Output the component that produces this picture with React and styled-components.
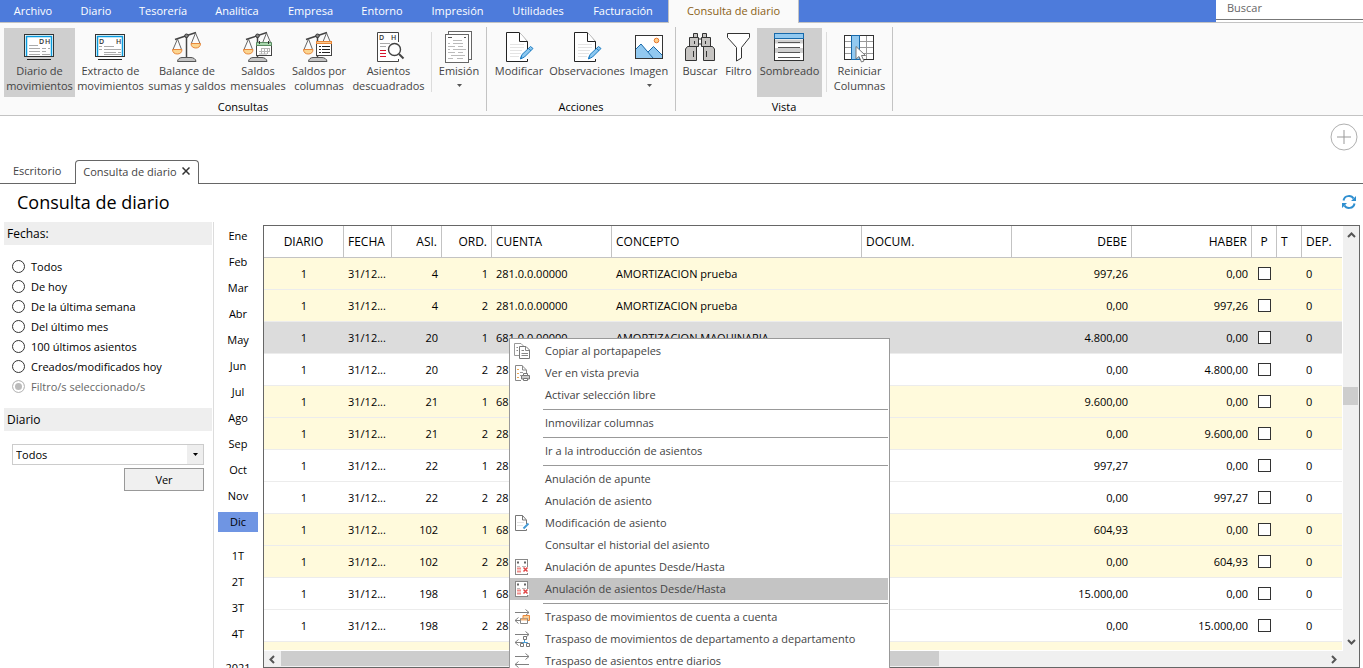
import styled, { createGlobalStyle, css } from "styled-components";

const GlobalStyle = createGlobalStyle`
  * {
    box-sizing: border-box;
  }

  body {
    margin: 0;
    background: #fff;
    color: #000;
    font-family: "Open Sans", "Noto Sans", sans-serif;
    font-size: 11px;
    line-height: 15px;
  }

  button,
  input,
  select {
    margin: 0;
    font: inherit;
    color: inherit;
  }
`;

const menus = [
  { label: "Archivo", width: 66 },
  { label: "Diario", width: 60 },
  { label: "Tesorería", width: 74 },
  { label: "Analítica", width: 74 },
  { label: "Empresa", width: 73 },
  { label: "Entorno", width: 70 },
  { label: "Impresión", width: 81 },
  { label: "Utilidades", width: 80 },
  { label: "Facturación", width: 90 },
  { label: "Consulta de diario", width: 131, active: true },
];

const ranges = [
  "Todos",
  "De hoy",
  "De la última semana",
  "Del último mes",
  "100 últimos asientos",
  "Creados/modificados hoy",
];

const periods = [
  ["Ene", "Feb", "Mar", "Abr", "May", "Jun", "Jul", "Ago", "Sep", "Oct", "Nov", "Dic"],
  ["1T", "2T", "3T", "4T"],
  ["2021"],
];

const columns = [
  { title: "DIARIO", width: 80, align: "center" },
  { title: "FECHA", width: 48 },
  { title: "ASI.", width: 50, align: "right" },
  { title: "ORD.", width: 50, align: "right" },
  { title: "CUENTA", width: 120 },
  { title: "CONCEPTO", width: 250 },
  { title: "DOCUM.", width: 150 },
  { title: "DEBE", width: 120, align: "right" },
  { title: "HABER", width: 120, align: "right" },
  { title: "P", width: 25, align: "center" },
  { title: "T", width: 25 },
  { title: "DEP." },
];

const rows = [
  { asi: "4", ord: "1", cuenta: "281.0.0.00000", concepto: "AMORTIZACION prueba", debe: "997,26", haber: "0,00", tone: "yellow" },
  { asi: "4", ord: "2", cuenta: "281.0.0.00000", concepto: "AMORTIZACION prueba", debe: "0,00", haber: "997,26", tone: "yellow" },
  { asi: "20", ord: "1", cuenta: "681.0.0.00000", concepto: "AMORTIZACION MAQUINARIA", debe: "4.800,00", haber: "0,00", tone: "selected" },
  { asi: "20", ord: "2", cuenta: "28", debe: "0,00", haber: "4.800,00" },
  { asi: "21", ord: "1", cuenta: "68", debe: "9.600,00", haber: "0,00", tone: "yellow" },
  { asi: "21", ord: "2", cuenta: "28", debe: "0,00", haber: "9.600,00", tone: "yellow" },
  { asi: "22", ord: "1", cuenta: "28", debe: "997,27", haber: "0,00" },
  { asi: "22", ord: "2", cuenta: "28", debe: "0,00", haber: "997,27" },
  { asi: "102", ord: "1", cuenta: "68", debe: "604,93", haber: "0,00", tone: "yellow" },
  { asi: "102", ord: "2", cuenta: "28", debe: "0,00", haber: "604,93", tone: "yellow" },
  { asi: "198", ord: "1", cuenta: "68", debe: "15.000,00", haber: "0,00" },
  { asi: "198", ord: "2", cuenta: "28", debe: "0,00", haber: "15.000,00" },
];

const menuGroups = [
  [
    { label: "Copiar al portapapeles", icon: "copy" },
    { label: "Ver en vista previa", icon: "preview" },
    { label: "Activar selección libre" },
  ],
  [{ label: "Inmovilizar columnas" }],
  [{ label: "Ir a la introducción de asientos" }],
  [
    { label: "Anulación de apunte" },
    { label: "Anulación de asiento" },
    { label: "Modificación de asiento", icon: "edit" },
    { label: "Consultar el historial del asiento" },
    { label: "Anulación de apuntes Desde/Hasta", icon: "cancel" },
    { label: "Anulación de asientos Desde/Hasta", icon: "cancel", active: true },
  ],
  [
    { label: "Traspaso de movimientos de cuenta a cuenta", icon: "moveAccount" },
    { label: "Traspaso de movimientos de departamento a departamento", icon: "moveDepartment" },
    { label: "Traspaso de asientos entre diarios", icon: "move" },
  ],
];

/* Ribbon icons */

function Icon({ children }) {
  return (
    <svg width="33" height="32" viewBox="0 0 33 32" fill="none" aria-hidden="true">
      {children}
    </svg>
  );
}

function ScreenIcon({ letters, lines }) {
  return (
    <Icon>
      <rect x="1.5" y="3.5" width="29" height="22" fill="#fff" stroke="#333" />
      <path d="M3.5 25V5.5H28.5V25" stroke="#0a9bdc" strokeWidth="1.5" />
      <path d={lines} stroke="#aaa" />
      <path d="M4 28.5H28" stroke="#222" />
      {letters.map(([letter, x]) => (
        <text key={letter} x={x} y="13" fill="#333" fontSize="7" fontWeight="600">
          {letter}
        </text>
      ))}
    </Icon>
  );
}

function ScaleShape({ rightPan = true }) {
  return (
    <>
      <path d="M15.5 5V26" stroke="#444" strokeWidth="1.5" />
      <path d="M4 8.5L25 1.5" stroke="#444" strokeWidth="1.5" />
      <path d="M6.5 8L2 18.5M6.5 8L10.5 18.5M24.5 2L20.5 12M24.5 2L29 12.5" stroke="#666" />
      <circle cx="15.5" cy="4.8" r="1.8" fill="#888" stroke="#333" />
      <path d="M1.5 18.5H11C11 21.5 9 23 6.3 23S1.5 21.5 1.5 18.5Z" fill="#fbd591" stroke="#e8873a" />
      {rightPan && (
        <path d="M20 12.5H29.5C29.5 15.5 27.5 17 24.8 17S20 15.5 20 12.5Z" fill="#fbd591" stroke="#e8873a" />
      )}
      <path d="M6.5 30.5C6.5 28 9 26.5 11 26.5H20C22 26.5 25 28 25 30.5Z" fill="#c4c4c4" stroke="#555" />
    </>
  );
}

function ScaleIcon() {
  return (
    <Icon>
      <ScaleShape />
    </Icon>
  );
}

function ScaleCalendarIcon() {
  return (
    <Icon>
      <ScaleShape rightPan={false} />
      <rect x="14.5" y="12.5" width="15" height="12" fill="#fff" stroke="#444" />
      <path d="M14.5 11.5H29.5V14.5H14.5Z" fill="#a8d8ae" stroke="#5b8b62" />
      <path d="M17.5 10V13M26.5 10V13" stroke="#333" />
      <path d="M19 17.5H28M17 20.5H28M17 23H25M19.5 17V23M22.5 17V23M25.5 17V23M27.5 17V21" stroke="#b5b5b5" />
    </Icon>
  );
}

function ScaleTableIcon() {
  return (
    <Icon>
      <g transform="translate(-1 0)">
        <ScaleShape rightPan={false} />
      </g>
      <rect x="13.5" y="12.5" width="15" height="12" fill="#fff" stroke="#444" />
      <rect x="13.5" y="10.5" width="15" height="2" fill="#fbc98a" stroke="#e8873a" />
      <path d="M16 15.5H27M16 18.5H27M16 21.5H27" stroke="#222" strokeDasharray="2 1 8" />
    </Icon>
  );
}

function MismatchIcon() {
  return (
    <Icon>
      <path d="M26.5 11V1.5H5.5V30.5H26.5V28" fill="#fff" stroke="#444" />
      <text x="7" y="9" fill="#333" fontSize="7" fontWeight="600">D</text>
      <text x="19" y="9" fill="#333" fontSize="7" fontWeight="600">H</text>
      <path d="M8 12.5H18M8 15.5H14" stroke="#aaa" />
      <path d="M8 19.5H14M8 22.5H14M8 25.5H14" stroke="#d8142c" />
      <circle cx="22.5" cy="18.5" r="6" fill="#fff" stroke="#444" strokeWidth="1.4" />
      <path d="M27 23L31.5 27.5" stroke="#444" strokeWidth="2" />
    </Icon>
  );
}

function PagesIcon() {
  return (
    <Icon>
      <rect x="5.5" y=".5" width="23" height="28" fill="#fff" stroke="#666" />
      <rect x="2.5" y="3.5" width="23" height="28" fill="#fff" stroke="#666" />
      <path d="M5 6.5H9M21 6.5H23" stroke="#555" />
      <path d="M10 9.5H19M5 12.5H7M10 12.5H20M5 15.5H12M15 15.5H20M5 18.5H7M10 18.5H23M5 21.5H12M15 21.5H20M8 24.5H22M5 27.5H10M14 27.5H20" stroke="#bbb" />
    </Icon>
  );
}

function EditPageIcon() {
  return (
    <Icon>
      <path d="M24.5 20V10.5L16 1.5H3.5V30.5H24.5V28" fill="#fff" stroke="#222" />
      <path d="M16.5 1.5V10.5H24.5" fill="#fff" stroke="#222" />
      <path d="M7 13.5H21M7 16.5H21M7 19.5H19M7 22.5H18M7 25.5H16" stroke="#e4e4e4" />
      <path d="M17.5 28L19 23.5L27.5 15.5L30 17.5L21.5 26Z" fill="#8cc8f0" stroke="#1b7bc2" />
      <path d="M25.5 17.5L28 19.7M17.5 28L18.5 25" stroke="#1b7bc2" />
    </Icon>
  );
}

function PictureIcon() {
  return (
    <Icon>
      <rect x="2.5" y="4.5" width="27" height="23" fill="#fff" />
      <path d="M3 18L8 13L20 27H3Z" fill="#92c9f0" />
      <path d="M15 21L20.5 15.5L29 24V27H20Z" fill="#92c9f0" />
      <path d="M3 18L8 13L20 27M15 21L20.5 15.5L29 24" stroke="#1769aa" />
      <rect x="2.5" y="4.5" width="27" height="23" stroke="#333" />
      <circle cx="23.5" cy="9.5" r="2.3" fill="#ffd08a" stroke="#e8762d" />
    </Icon>
  );
}

function BinocularsIcon() {
  return (
    <Icon>
      <g fill="#c6c4c2" stroke="#333">
        <path d="M9.5 2.5H13.5V6.5H9.5ZM18.5 2.5H22.5V6.5H18.5Z" />
        <path d="M14 8H18V13H14Z" fill="#fff" />
        <path d="M5.5 6.5H14.5V15.5H5.5ZM17.5 6.5H26.5V15.5H17.5Z" />
        <path d="M3.5 15.5H12.5V29.5H1.5V18ZM19.5 15.5H28.5L30.5 18V29.5H19.5Z" />
        <path d="M10.5 10V13M21.5 10V13M9.5 20V26M22.5 20V26" />
      </g>
    </Icon>
  );
}

function FunnelIcon() {
  return (
    <Icon>
      <path d="M5.5 2.5H27.5V6.5L19.5 16.5V27L14.5 30V16.5L5.5 6.5Z" fill="#fff" stroke="#333" />
    </Icon>
  );
}

function ShadedRowsIcon() {
  return (
    <Icon>
      <rect x="1.5" y="2.5" width="29" height="27" fill="#fff" stroke="#333" />
      <path d="M2 19.5H30" stroke="#d0d0d0" strokeWidth="5" />
      <path d="M2 10.5H30" stroke="#d0d0d0" strokeWidth="4" />
      <rect x="1.5" y="2.5" width="29" height="5" fill="#92c9f0" stroke="#1769aa" />
      <path d="M5 11.5H27M5 16.5H27M5 21.5H27M5 26.5H27" stroke="#555" />
    </Icon>
  );
}

function ColumnsIcon() {
  return (
    <Icon>
      <rect x="1.5" y="4.5" width="29" height="24" fill="#fff" />
      <path d="M2 10.5H30M2 16.5H30M2 22.5H30M23.5 5V28" stroke="#999" />
      <rect x="1.5" y="4.5" width="29" height="24" stroke="#333" />
      <rect x="8.5" y="4.5" width="8" height="24" fill="#92c9f0" stroke="#1769aa" />
      <path d="M13 15.5V28L16 25.5L18.5 31L21 30L18.5 24.5H22.5Z" fill="#fff" stroke="#777" />
    </Icon>
  );
}

/* Context menu icons */

function SwapArrows() {
  return <path d="M1 3.5H15M11.5 .5L15 3.5L11.5 6.5M1 11.5H9M4.5 8.5L1 11.5L4.5 14.5" stroke="#808080" />;
}

const menuIcons = {
  copy: (
    <>
      <path d="M5 12.5H.5V.5H7L9.5 3" fill="#fff" stroke="#999" />
      <path d="M5.5 3.5H12L15.5 7V15.5H5.5Z" fill="#fff" stroke="#777" />
      <path d="M11.5 3.5V7.5H15M2.5 4.5H4M2.5 7.5H4M7.5 7.5H10M7.5 10.5H14M7.5 12.5H14" stroke="#888" />
    </>
  ),
  preview: (
    <>
      <path d="M7 15.5H1.5V.5H8L12.5 5V8" fill="#fff" stroke="#888" />
      <path d="M8.5 .5V5H12" stroke="#888" />
      <path d="M3 4.5H5M3 8.5H5M3 12.5H5" stroke="#eaa754" />
      <path d="M6 7.5H9M6 10.5H7" stroke="#999" />
      <path d="M7.5 10.5H15.5V14H7.5Z" fill="#ccc" stroke="#777" />
      <path d="M9.5 8.5H13.5V10.5H9.5ZM9.5 13.5H13.5V15.5H9.5Z" fill="#fff" stroke="#777" />
    </>
  ),
  edit: (
    <>
      <path d="M12.5 9V5L8.5 .5H1.5V15.5H12.5V14" fill="#fff" stroke="#777" />
      <path d="M8.5 .5V5H12" stroke="#777" />
      <path d="M3 7.5H10M3 10.5H9" stroke="#e4e4e4" />
      <path d="M9.5 13.5L14.5 8.5" stroke="#459bd6" strokeWidth="2" />
    </>
  ),
  cancel: (
    <>
      <rect x="1.5" y=".5" width="12" height="15" fill="#fff" stroke="#888" />
      <path d="M3 3.5H5M10 3.5H12" stroke="#666" strokeWidth="2" />
      <path d="M3 7.5H6M8 7.5H12" stroke="#bbb" />
      <path d="M3 9.5H7M3 12.5H7" stroke="#f0908c" strokeWidth="2" />
      <path d="M8 8H15V14H8Z" fill="#fff" />
      <path d="M9.5 8.5L13.5 12.5M13.5 8.5L9.5 12.5" stroke="#e04545" strokeWidth="1.5" />
    </>
  ),
  moveAccount: (
    <>
      <SwapArrows />
      <path d="M9 6.5H15.5V11.5H9Z" fill="#fbd09a" stroke="#e8873a" />
      <path d="M6.5 9.5H13.5V14.5H6.5Z" fill="#fff" stroke="#888" />
      <path d="M7 10.5H13" stroke="#f3b072" strokeWidth="2" />
    </>
  ),
  moveDepartment: (
    <>
      <SwapArrows />
      <path d="M10.5 9V11.5M8.5 13V11.5H13.5V13" stroke="#459bd6" />
      <path d="M9.5 5.5H12.5V8.5H9.5ZM6.5 12.5H9.5V15.5H6.5ZM12.5 12.5H15.5V15.5H12.5Z" fill="#fff" stroke="#777" />
    </>
  ),
  move: <path d="M1 3.5H15M11.5 .5L15 3.5L11.5 6.5M15 11.5H1M4.5 8.5L1 11.5L4.5 14.5" stroke="#808080" />,
};

function Chevron({ turn = 0 }) {
  return (
    <svg width="9" height="9" viewBox="0 0 9 9" fill="none" aria-hidden="true">
      <path d="M1 6L4.5 2.5L8 6" stroke="#555" strokeWidth="2" transform={`rotate(${turn} 4.5 4.5)`} />
    </svg>
  );
}

function Triangle({ color }) {
  return (
    <svg width="5" height="3" viewBox="0 0 5 3" aria-hidden="true">
      <path d="M0 0H5L2.5 3Z" fill={color} />
    </svg>
  );
}

function Tool({ width, icon, label, pressed, dropdown }) {
  return (
    <ToolButton type="button" $width={width} $pressed={pressed}>
      {icon}
      {label.map((line) => (
        <span key={line}>{line}</span>
      ))}
      {dropdown && (
        <DropMark>
          <Triangle color="#555" />
        </DropMark>
      )}
    </ToolButton>
  );
}

function Ribbon() {
  return (
    <RibbonBar>
      <ToolGroup>
        <Tools>
          <Tool
            width={71}
            pressed
            icon={
              <ScreenIcon
                letters={[["D", 16], ["H", 22]]}
                lines="M6 14.5H15M6 17.5H17M19 17.5H23M6 20.5H17M19 20.5H23M25 17.5H27M6 23.5H17M19 23.5H27"
              />
            }
            label={["Diario de", "movimientos"]}
          />
          <Tool
            width={71}
            icon={
              <ScreenIcon
                letters={[["D", 5], ["H", 22]]}
                lines="M5 15.5H8M10 15.5H20M5 18.5H8M10 18.5H27M10 21.5H22M24 21.5H27M10 23.5H27"
              />
            }
            label={["Extracto de", "movimientos"]}
          />
          <Tool width={82} icon={<ScaleIcon />} label={["Balance de", "sumas y saldos"]} />
          <Tool width={60} icon={<ScaleCalendarIcon />} label={["Saldos", "mensuales"]} />
          <Tool width={62} icon={<ScaleTableIcon />} label={["Saldos por", "columnas"]} />
          <Tool width={77} icon={<MismatchIcon />} label={["Asientos", "descuadrados"]} />
          <ToolDivider />
          <Tool width={46} icon={<PagesIcon />} label={["Emisión"]} dropdown />
        </Tools>
        <GroupName>Consultas</GroupName>
      </ToolGroup>
      <ToolGroup>
        <Tools>
          <Tool width={56} icon={<EditPageIcon />} label={["Modificar"]} />
          <Tool width={80} icon={<EditPageIcon />} label={["Observaciones"]} />
          <Tool width={44} icon={<PictureIcon />} label={["Imagen"]} dropdown />
        </Tools>
        <GroupName>Acciones</GroupName>
      </ToolGroup>
      <ToolGroup>
        <Tools>
          <Tool width={40} icon={<BinocularsIcon />} label={["Buscar"]} />
          <Tool width={37} icon={<FunnelIcon />} label={["Filtro"]} />
          <Tool width={65} pressed icon={<ShadedRowsIcon />} label={["Sombreado"]} />
          <ToolDivider />
          <Tool width={57} icon={<ColumnsIcon />} label={["Reiniciar", "Columnas"]} />
        </Tools>
        <GroupName>Vista</GroupName>
      </ToolGroup>
    </RibbonBar>
  );
}

function Filters() {
  return (
    <FiltersPanel>
      <PanelTitle id="fechas">Fechas:</PanelTitle>
      <RadioList role="radiogroup" aria-labelledby="fechas">
        {ranges.map((range) => (
          <RadioLabel key={range}>
            <Radio type="radio" name="rango" />
            {range}
          </RadioLabel>
        ))}
        <RadioLabel $disabled>
          <Radio type="radio" name="filtro" defaultChecked disabled />
          Filtro/s seleccionado/s
        </RadioLabel>
      </RadioList>
      <PanelTitle as="label" htmlFor="diario">
        Diario
      </PanelTitle>
      <JournalForm>
        <SelectBox>
          <Select id="diario">
            <option>Todos</option>
          </Select>
          <SelectArrow>
            <Triangle color="#000" />
          </SelectArrow>
        </SelectBox>
        <ViewButton type="button">Ver</ViewButton>
      </JournalForm>
    </FiltersPanel>
  );
}

function Grid() {
  return (
    <GridFrame>
      <GridMain>
        <GridView>
          <Table>
            <colgroup>
              {columns.map((column) => (
                <Column key={column.title} $width={column.width} />
              ))}
            </colgroup>
            <thead>
              <tr>
                {columns.map((column) => (
                  <HeadCell key={column.title} $align={column.align}>
                    {column.title}
                  </HeadCell>
                ))}
              </tr>
            </thead>
            <tbody>
              {rows.map((row) => (
                <Row key={row.asi + "-" + row.ord} $tone={row.tone}>
                  <Cell $align="center">1</Cell>
                  <Cell>31/12...</Cell>
                  <Cell $align="right">{row.asi}</Cell>
                  <Cell $align="right">{row.ord}</Cell>
                  <Cell>{row.cuenta}</Cell>
                  <Cell>{row.concepto}</Cell>
                  <Cell />
                  <Cell $align="right">{row.debe}</Cell>
                  <Cell $align="right">{row.haber}</Cell>
                  <Cell $align="center">
                    <Check type="checkbox" aria-label="P" />
                  </Cell>
                  <Cell />
                  <Cell>0</Cell>
                </Row>
              ))}
              <Row $tone="yellow">
                <Cell colSpan={columns.length} />
              </Row>
            </tbody>
          </Table>
        </GridView>
        <VerticalBar>
          <ScrollButton type="button" aria-label="Subir">
            <Chevron />
          </ScrollButton>
          <VerticalTrack>
            <VerticalThumb />
          </VerticalTrack>
          <ScrollButton type="button" aria-label="Bajar">
            <Chevron turn={180} />
          </ScrollButton>
        </VerticalBar>
      </GridMain>
      <HorizontalBar>
        <ScrollButton type="button" aria-label="Izquierda">
          <Chevron turn={270} />
        </ScrollButton>
        <HorizontalTrack>
          <HorizontalThumb />
        </HorizontalTrack>
        <ScrollButton type="button" aria-label="Derecha">
          <Chevron turn={90} />
        </ScrollButton>
      </HorizontalBar>
    </GridFrame>
  );
}

function ContextMenu() {
  return (
    <MenuBox role="menu">
      {menuGroups.map((group) => (
        <MenuGroup key={group[0].label}>
          {group.map((item) => (
            <MenuItem key={item.label} type="button" role="menuitem" $active={item.active}>
              <MenuIcon viewBox="0 0 16 16" fill="none" aria-hidden="true">
                {menuIcons[item.icon]}
              </MenuIcon>
              <MenuLabel>{item.label}</MenuLabel>
            </MenuItem>
          ))}
        </MenuGroup>
      ))}
    </MenuBox>
  );
}

function App() {
  return (
    <Page>
      <GlobalStyle />
      <TopBar>
        {menus.map((menu) => (
          <TopTab key={menu.label} type="button" $width={menu.width} $active={menu.active}>
            {menu.label}
          </TopTab>
        ))}
        <Search type="search" placeholder="Buscar" aria-label="Buscar" />
      </TopBar>
      <Ribbon />
      <AddArea>
        <AddButton type="button" aria-label="Añadir">
          <svg width="28" height="28" viewBox="0 0 28 28" fill="none" aria-hidden="true">
            <circle cx="14" cy="14" r="13" stroke="#b0b0b0" />
            <path d="M14 7V21M7 14H21" stroke="#999" />
          </svg>
        </AddButton>
      </AddArea>
      <DocTabs>
        <DocTab type="button">Escritorio</DocTab>
        <DocTab type="button" $active>
          Consulta de diario
          <svg width="8" height="8" viewBox="0 0 8 8" fill="none" aria-hidden="true">
            <path d="M.5 .5L7.5 7.5M7.5 .5L.5 7.5" stroke="#333" strokeWidth="1.5" />
          </svg>
        </DocTab>
        <DocTabsRest />
      </DocTabs>
      <Heading>
        <Title>Consulta de diario</Title>
        <RefreshButton type="button" aria-label="Actualizar">
          <svg width="14" height="14" viewBox="0 0 14 14" fill="none" aria-hidden="true">
            <path d="M1.5 5.5C2.5 0 9.5 0 11.5 3.5M12.5 8.5C11.5 14 4.5 14 2.5 10.5" stroke="#2f8fd0" strokeWidth="2" />
            <path d="M14 1V6H9ZM0 13V8H5Z" fill="#2f8fd0" />
          </svg>
        </RefreshButton>
      </Heading>
      <Content>
        <Filters />
        <Periods>
          {periods.map((group) => (
            <PeriodGroup key={group[0]}>
              {group.map((period) => (
                <Period key={period} type="button" $active={period === "Dic"}>
                  {period}
                </Period>
              ))}
            </PeriodGroup>
          ))}
        </Periods>
        <Grid />
      </Content>
      <ContextMenu />
    </Page>
  );
}

const Page = styled.div`
  position: relative;
  display: flex;
  flex-direction: column;
  height: 100vh;
  overflow: hidden;
`;

const TopBar = styled.nav`
  display: flex;
  height: 23px;
  background: #4d7bdb;
  border-bottom: 1px solid #c3c3c3;
`;

const TopTab = styled.button`
  width: ${(props) => props.$width}px;
  height: 22px;
  padding: 0 0 2px;
  border: 0;
  background: none;
  color: #fff;
  white-space: nowrap;

  ${(props) =>
    props.$active &&
    css`
      height: 23px;
      background: #fafafa;
      border-left: 1px solid #c3c3c3;
      border-right: 1px solid #c3c3c3;
      color: #8a6116;
    `}
`;

const Search = styled.input`
  width: 147px;
  height: 20px;
  margin-left: auto;
  padding: 0 11px 4px;
  border: 0;
  border-bottom: 1px solid #777;
  border-radius: 0;
  box-shadow: 0 2px 0 #fff;
  background: #fff;

  &::placeholder {
    color: #666;
  }
`;

const RibbonBar = styled.div`
  display: flex;
  flex-shrink: 0;
  height: 93px;
  padding-top: 4px;
  background: #fafafa;
  border-bottom: 1px solid #c3c3c3;
`;

const ToolGroup = styled.section`
  display: flex;
  flex-direction: column;
  height: 84px;
  padding: 1px 4px 0;
  border-right: 1px solid #c3c3c3;
`;

const Tools = styled.div`
  display: flex;
`;

const ToolButton = styled.button`
  display: flex;
  flex-direction: column;
  align-items: center;
  flex-shrink: 0;
  width: ${(props) => props.$width}px;
  height: 69px;
  padding: 3px 0 0;
  border: 0;
  background: ${(props) => (props.$pressed ? "#cfcfcf" : "none")};
  color: #444;
  white-space: nowrap;
`;

const DropMark = styled.span`
  display: flex;
  align-items: center;
  height: 15px;
`;

const ToolDivider = styled.div`
  width: 1px;
  height: 60px;
  margin: 4px 4px 0;
  background: #dcdcdc;
`;

const GroupName = styled.div`
  margin-top: 2px;
  text-align: center;
`;

const AddArea = styled.div`
  display: flex;
  justify-content: flex-end;
  align-items: center;
  flex-shrink: 0;
  height: 44px;
  padding: 0 5px 2px 0;
`;

const AddButton = styled.button`
  display: flex;
  padding: 0;
  border: 0;
  background: none;
`;

const DocTabs = styled.div`
  display: flex;
  flex-shrink: 0;
  height: 24px;
`;

const DocTab = styled.button`
  display: flex;
  align-items: center;
  gap: 5px;
  padding: 0 14px 2px 13px;
  border: 0;
  border-bottom: 1px solid #666;
  background: #fff;
  color: #444;
  white-space: nowrap;

  ${(props) =>
    props.$active &&
    css`
      padding: 0 8px 3px 7px;
      border: 1px solid #666;
      border-bottom: 0;
      border-radius: 4px 4px 0 0;
    `}
`;

const DocTabsRest = styled.div`
  flex: 1;
  border-bottom: 1px solid #666;
`;

const Heading = styled.header`
  display: flex;
  justify-content: space-between;
  align-items: center;
  flex-shrink: 0;
  height: 38px;
  padding: 0 7px 2px 17px;
`;

const Title = styled.h1`
  margin: 0;
  font-size: 18px;
  font-weight: 400;
  line-height: 24px;
`;

const RefreshButton = styled.button`
  display: flex;
  padding: 0;
  border: 0;
  background: none;
`;

const Content = styled.main`
  display: flex;
  flex: 1;
  min-height: 0;
  padding-left: 4px;
`;

const FiltersPanel = styled.aside`
  width: 210px;
  flex-shrink: 0;
  padding-right: 1px;
  border-right: 1px solid #dcdcdc;
`;

const PanelTitle = styled.div`
  display: block;
  height: 23px;
  padding: 0 3px;
  background: #eee;
  font-size: 12px;
  line-height: 23px;
`;

const RadioList = styled.div`
  padding: 11px 8px 12px;
`;

const RadioLabel = styled.label`
  display: flex;
  align-items: center;
  gap: 6px;
  height: 20px;
  color: ${(props) => (props.$disabled ? "#666" : "#000")};
`;

const Radio = styled.input`
  appearance: none;
  width: 13px;
  height: 13px;
  border: 1px solid #333;
  border-radius: 50%;
  background: #fff;

  &:disabled {
    border-color: #bbb;
    background: #bbb;
    box-shadow: inset 0 0 0 2px #fff;
  }
`;

const JournalForm = styled.div`
  display: flex;
  flex-direction: column;
  gap: 3px;
  padding: 13px 8px 0;
`;

const SelectBox = styled.div`
  display: flex;
  position: relative;
`;

const Select = styled.select`
  appearance: none;
  width: 100%;
  height: 21px;
  padding: 0 20px 0 3px;
  border: 1px solid #ccc;
  border-radius: 0;
  background: #fff;
`;

const SelectArrow = styled.span`
  position: absolute;
  top: 1px;
  right: 1px;
  bottom: 1px;
  display: flex;
  align-items: center;
  justify-content: center;
  width: 16px;
  background: #eee;
  pointer-events: none;
`;

const ViewButton = styled.button`
  align-self: flex-end;
  width: 80px;
  height: 23px;
  padding: 0;
  border: 1px solid #999;
  background: #f0f0f0;
`;

const Periods = styled.div`
  display: flex;
  flex-direction: column;
  gap: 14px;
  flex-shrink: 0;
  width: 49px;
  padding: 4px 5px 0 4px;
  overflow: hidden;
`;

const PeriodGroup = styled.div`
  display: flex;
  flex-direction: column;
  gap: 6px;
  flex-shrink: 0;
`;

const Period = styled.button`
  height: 20px;
  padding: 0 0 2px;
  border: 0;
  background: ${(props) => (props.$active ? "#6f95e3" : "none")};
`;

const GridFrame = styled.div`
  display: flex;
  flex-direction: column;
  flex: 1;
  min-width: 0;
  margin: 3px 3px 0 0;
  border: 1px solid #666;
`;

const GridMain = styled.div`
  display: flex;
  flex: 1;
  min-height: 0;
`;

const GridView = styled.div`
  flex: 1;
  min-width: 0;
  overflow: hidden;
  border-bottom: 1px solid #fff;
`;

const Table = styled.table`
  width: 100%;
  table-layout: fixed;
  border-collapse: separate;
  border-spacing: 0;
`;

const Column = styled.col`
  width: ${(props) => (props.$width ? props.$width + "px" : "auto")};
`;

const HeadCell = styled.th`
  height: 32px;
  padding: 0 4px;
  border-right: 1px solid #c3c3c3;
  border-bottom: 1px solid #c3c3c3;
  font-size: 12px;
  font-weight: 400;
  text-align: ${(props) => props.$align || "left"};
  white-space: nowrap;

  &:last-child {
    border-right: 0;
  }
`;

const tones = {
  yellow: "#fffadc",
  selected: "#dcdcdc",
};

const Row = styled.tr`
  background: ${(props) => tones[props.$tone] || "#fff"};
`;

const Cell = styled.td`
  height: 32px;
  padding: 0 4px;
  border-bottom: 1px solid #ececec;
  text-align: ${(props) => props.$align || "left"};
  white-space: nowrap;
`;

const Check = styled.input`
  appearance: none;
  display: block;
  width: 13px;
  height: 13px;
  margin: 0 auto;
  border: 1px solid #333;
  background: #fff;
`;

const ScrollButton = styled.button`
  display: flex;
  align-items: center;
  justify-content: center;
  flex: 0 0 17px;
  padding: 0;
  border: 0;
  background: #f0f0f0;
`;

const VerticalBar = styled.div`
  display: flex;
  flex-direction: column;
  width: 17px;
  padding: 1px 0;
  border-left: 1px solid #fff;
  background: #f0f0f0;
`;

const VerticalTrack = styled.div`
  display: flex;
  flex-direction: column;
  flex: 1;
`;

const VerticalThumb = styled.div`
  width: 15px;
  height: 18px;
  margin-top: 143px;
  background: #cdcdcd;
`;

const HorizontalBar = styled.div`
  display: flex;
  height: 16px;
  padding-right: 17px;
  background: #f0f0f0;
`;

const HorizontalTrack = styled.div`
  flex: 1;
`;

const HorizontalThumb = styled.div`
  width: 63%;
  height: 15px;
  background: #cdcdcd;
`;

const MenuBox = styled.div`
  position: absolute;
  top: 338px;
  left: 509px;
  width: 381px;
  padding: 1px 1px 1px 0;
  border: 1px solid #999;
  background: #fff;
`;

const MenuGroup = styled.div`
  & + &::before {
    content: "";
    display: block;
    height: 1px;
    margin: 3px 0 2px 33px;
    background: #999;
  }
`;

const MenuItem = styled.button`
  display: flex;
  align-items: center;
  gap: 15px;
  width: 100%;
  height: 22px;
  padding: 0 4px;
  border: 0;
  background: ${(props) => (props.$active ? "#c4c4c4" : "none")};
  color: #444;
  white-space: nowrap;
`;

const MenuIcon = styled.svg`
  width: 16px;
  height: 16px;
`;

const MenuLabel = styled.span`
  padding-bottom: 2px;
`;

export default App;
